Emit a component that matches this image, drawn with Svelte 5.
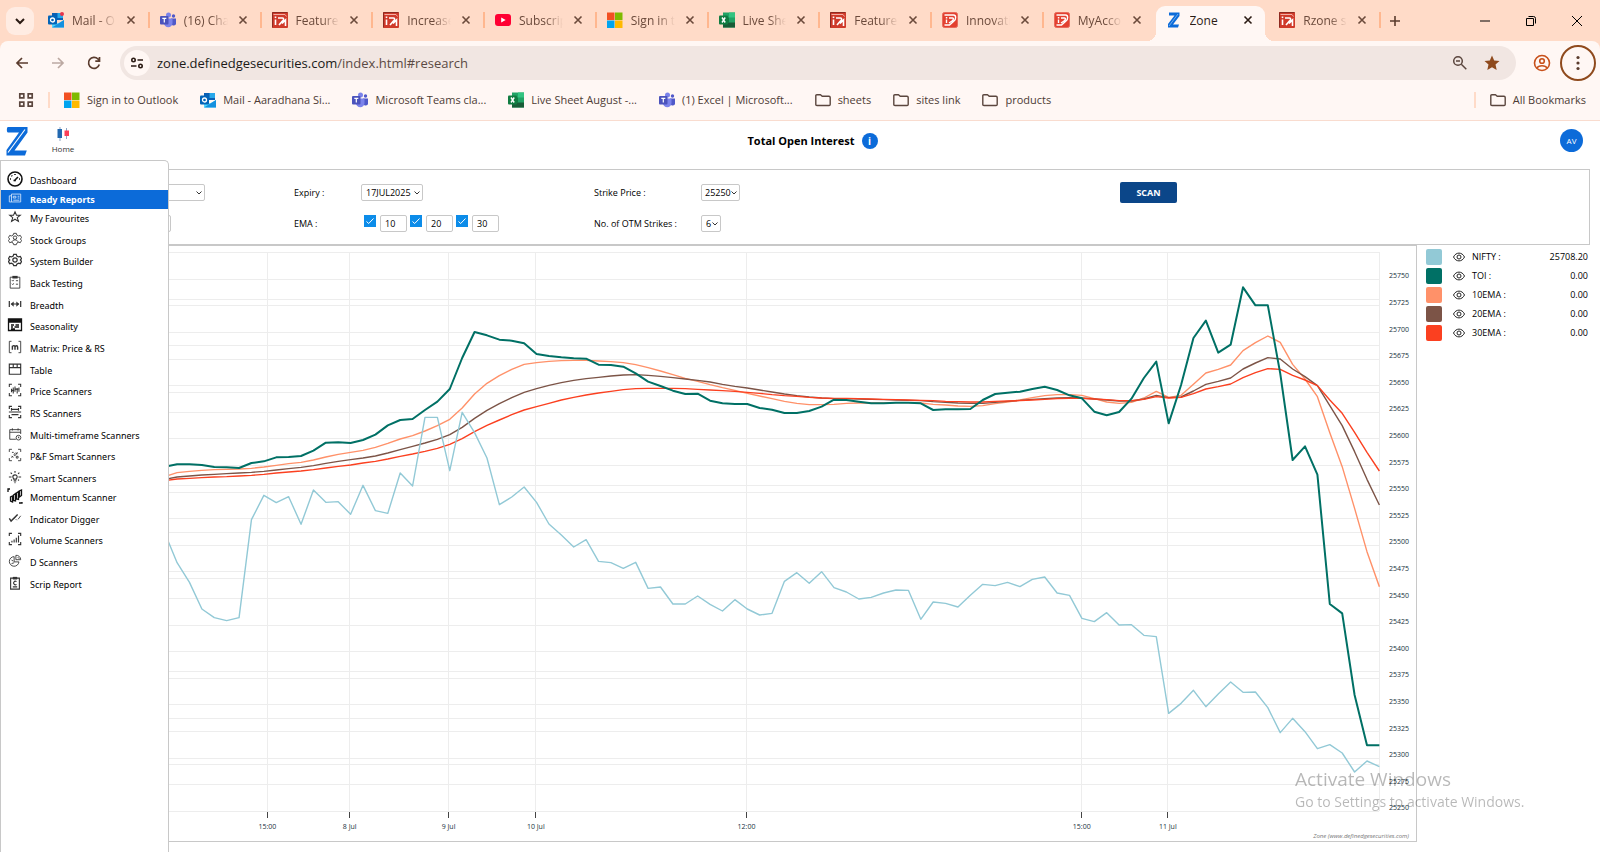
<script>
	const tabs = [
		{ icon: 'outlook', title: 'Mail - O', dot: true },
		{ icon: 'teams', title: '(16) Cha' },
		{ icon: 'rz', title: 'Feature' },
		{ icon: 'rz', title: 'Increase' },
		{ icon: 'youtube', title: 'Subscrip' },
		{ icon: 'ms', title: 'Sign in t' },
		{ icon: 'excel', title: 'Live She' },
		{ icon: 'rz', title: 'Feature' },
		{ icon: 'rd', title: 'Innovati' },
		{ icon: 'rd', title: 'MyAcco' },
		{ icon: 'zone', title: 'Zone', active: true },
		{ icon: 'rz', title: 'Rzone s' }
	];

	const bookmarks = [
		{ icon: 'ms', title: 'Sign in to Outlook' },
		{ icon: 'outlook', title: 'Mail - Aaradhana Si...' },
		{ icon: 'teams', title: 'Microsoft Teams cla...' },
		{ icon: 'excel', title: 'Live Sheet August -...' },
		{ icon: 'teams', title: '(1) Excel | Microsoft...' },
		{ icon: 'folder', title: 'sheets' },
		{ icon: 'folder', title: 'sites link' },
		{ icon: 'folder', title: 'products' }
	];

	const corners = 'M1.5 4.5v-3h3M11.5 1.5h3v3M1.5 11.5v3h3M11.5 14.5h3v-3';
	const gear =
		'M6.5 1.5h3l.6 2 2 1 2-.6 1.4 2.6-1.4 1.5 1.4 1.6-1.4 2.6-2-.6-2 1.1-.6 1.8h-3l-.6-1.8-2-1.1-2 .6L.5 9.600 2 8 .5 6.500l1.400-2.600 2 .600 2-1z';

	// row is the height class, d is stroked and fill is painted solid
	const menu = [
		{ label: 'Dashboard', row: 'low', big: true, w: 1.6, d: 'M8 1a7 7 0 1 1 0 14 7 7 0 0 1 0-14zM7 10l4-4M6.500 9.500h2.500M3 8h1M8 3v1M4.500 4.500l.7.7M12 8h1' },
		{ label: 'Ready Reports', row: 'low', active: true, d: 'M4 3.500h10.500v9H4zM4 5.500H1.500v7H4M6 6h3v2H6zM11 6h2M11 8h2M6 10.500h7' },
		{ label: 'My Favourites', row: 'low', w: 1.2, d: 'M8 2l1.700 4H14l-3.400 2.700 1.300 4.300L8 10.500 4.100 13l1.300-4.300L2 6h4.300z' },
		{ label: 'Stock Groups', row: 'high', d: gear + 'M8 4.500a2 2 0 1 1 0 4 2 2 0 0 1 0-4zM4.500 12c0-4 7-4 7 0' },
		{ label: 'System Builder', row: 'mid', w: 1.4, d: gear + 'M8 5.500a2.500 2.500 0 1 1 0 5 2.500 2.500 0 0 1 0-5z' },
		{ label: 'Back Testing', row: 'high', d: 'M2.500 2.500h11v12.500h-11zM4.500 6l1 1 1-1.500M4.500 10l1 1 1-1.500M9 6.500h2.500M9 10.500h2.500', fill: 'M5 1h6v3H5z' },
		{ label: 'Breadth', row: 'high', w: 1.4, d: 'M1.500 4.500v7M14.500 4.500v7M4 8h8', fill: 'M3 8l3.500-3v6zM13 8l-3.500-3v6z' },
		{ label: 'Seasonality', row: 'mid', w: 1.3, big: true, d: 'M1.500 2h13v11.500h-13zM1.500 3.500h13M1.500 5h13M4 8h3M8.500 8h3.500M4 10h2M7.500 10H12M4 12h4' },
		{ label: 'Matrix: Price & RS', row: 'high', d: 'M4 1.500H1.500v13H4M12 1.500h2.500v13H12', bold: 'M5 11V6.500M5 7.500c1-1.500 3-1.500 3 .5v3M8 8c.5-2 3-2 3 0v3' },
		{ label: 'Table', row: 'high', w: 1.3, d: 'M1.500 2.500h13v11.500h-13zM1.500 6.500h13M6 2.500v4M10.500 2.500v4' },
		{ label: 'Price Scanners', row: 'mid', w: 1.2, d: corners + 'M4 10.500V6.500M6 12V5M8 10V4M10.500 12V6M12.500 10V5', bold: 'M3.500 8.500h3.500M8 7h4' },
		{ label: 'RS Scanners', row: 'high', w: 1.3, d: corners + 'M4 5h8M1 8h14M4 11h8M4 3.500v3M12 3.500v3' },
		{ label: 'Multi-timeframe Scanners', row: 'high', d: 'M9 14H2V3h12.500v5M2 6h12.500M5 1.500V4M11.500 1.500V4M12 9.500a2.700 2.700 0 1 1 0 5.400 2.700 2.700 0 0 1 0-5.400zM12 11v1.500h1' },
		{ label: 'P&F Smart Scanners', row: 'mid', d: corners + 'M4 9l2 2M6 9l-2 2M9 5l2 2M11 5L9 7M7 7.500a1 1 0 1 1 0 .1zM9.500 9.500h2v2h-2zM4.500 5h2' },
		{ label: 'Smart Scanners', row: 'high', w: 1.3, d: 'M5.500 8a2.500 2.500 0 1 1 5 0l-1 2.500h-3zM6.500 12.500h3M8 1v2M3 3l1.500 1.500M13 3l-1.500 1.500M1 8h3M12 8h3M3.500 12l1-1M12.500 12l-1-1M7.500 14.500h1' },
		{ label: 'Momentum Scanner', row: 'low', big: true, w: 1.3, d: 'M1 4V1h2M12 15h3v-1M3.500 9v4l2 1V8zM6.500 7v5.500l2 .5V5.500zM9.500 5v6l2 .5V3.500zM12.500 3v6l2-1.500V2z' },
		{ label: 'Indicator Digger', row: 'high', d: 'M6 9l2.500-2M11.500 9.500l3-4M9 9.500l1 1', bold: 'M1.500 8.500l2 3L11 4' },
		{ label: 'Volume Scanners', row: 'mid', w: 1.3, d: corners + 'M4.500 12v-2M7 12V8.500M9.500 12V6.500M12 12V4' },
		{ label: 'D Scanners', row: 'high', d: 'M7 3a5.500 5.500 0 1 0 5.500 6H7zM9 1.500a5 5 0 0 1 5.500 5H9zM4 7l2 1M4 11l3-1M11 3.500l2 2' },
		{ label: 'Scrip Report', row: 'high', w: 1.3, d: 'M3 2.500h10v12.500H3zM5.500 12.500h5M9.700 6.500a2 2 0 1 0 0 3M8 5v1', fill: 'M5.500 1h5v3h-5z' }
	];

	// series values are measured down from the top of the pane, one per bar
	const series = [
		{
			name: '10EMA', value: '0.00', color: '#ff9169', width: 1.4,
			points: [710, 698, 694, 691, 689, 688, 687, 685, 681, 676, 671, 667, 660, 651, 643, 637, 631, 622, 610, 597, 587, 573, 557, 538, 504, 462, 430, 407, 388, 373, 368, 364, 362, 361, 361, 363, 365, 368, 374, 383, 393, 404, 415, 424, 434, 443, 451, 460, 468, 476, 484, 490, 494, 494, 493, 490, 489, 489, 489, 488, 488, 489, 493, 495, 498, 499, 497, 491, 486, 480, 473, 467, 464, 464, 466, 476, 486, 490, 487, 474, 454, 472, 466, 433, 399, 388, 375, 332, 308, 288, 307, 373, 417, 470, 578, 680, 805, 935, 1040]
		},
		{
			name: '20EMA', value: '0.00', color: '#7c5447', width: 1.4,
			points: [718, 711, 708, 705, 703, 701, 699, 697, 694, 690, 686, 682, 677, 670, 664, 659, 654, 648, 639, 629, 619, 609, 598, 584, 562, 535, 511, 491, 473, 457, 446, 436, 428, 421, 416, 412, 408, 405, 404, 406, 409, 413, 417, 421, 426, 433, 439, 444, 450, 456, 462, 467, 471, 474, 476, 476, 477, 478, 479, 480, 481, 482, 485, 487, 489, 490, 490, 487, 484, 481, 478, 476, 474, 473, 474, 477, 480, 483, 483, 477, 466, 473, 471, 453, 433, 424, 414, 387, 369, 353, 357, 387, 410, 437, 497, 557, 635, 718, 795]
		},
		{
			name: '30EMA', value: '0.00', color: '#fb4020', width: 1.4,
			points: [722, 717, 715, 713, 711, 710, 708, 706, 703, 699, 696, 693, 689, 684, 679, 675, 669, 664, 657, 649, 642, 634, 625, 613, 596, 575, 556, 540, 524, 510, 500, 490, 480, 472, 465, 459, 454, 449, 446, 445, 445, 445, 446, 448, 450, 452, 454, 457, 460, 464, 467, 469, 472, 474, 475, 475, 476, 477, 478, 479, 480, 481, 482, 484, 485, 486, 486, 484, 483, 482, 480, 478, 476, 475, 475, 477, 479, 482, 482, 478, 470, 474, 472, 461, 447, 440, 432, 413, 398, 386, 388, 406, 420, 437, 480, 520, 577, 637, 693]
		},
		{
			name: 'NIFTY', value: '25708.20', color: '#92c9d6', width: 1.4,
			points: [878, 968, 1027, 1107, 1133, 1142, 1133, 839, 766, 788, 770, 853, 750, 787, 785, 823, 736, 812, 820, 699, 738, 532, 532, 692, 517, 578, 654, 794, 771, 741, 787, 852, 885, 921, 899, 964, 968, 985, 967, 1045, 1041, 1092, 1092, 1068, 1093, 1113, 1079, 1107, 1125, 1120, 1024, 998, 1030, 995, 1043, 1056, 1077, 1072, 1059, 1050, 1051, 1138, 1086, 1090, 1101, 1066, 1033, 1037, 1027, 1040, 1018, 1011, 1059, 1066, 1135, 1145, 1118, 1155, 1154, 1186, 1190, 1420, 1390, 1351, 1400, 1362, 1326, 1357, 1356, 1403, 1478, 1435, 1475, 1526, 1514, 1539, 1596, 1563, 1580]
		},
		{
			name: 'TOI', value: '0.00', color: '#007065', width: 2,
			points: [680, 673, 673, 675, 681, 682, 684, 669, 664, 652, 651, 648, 632, 608, 607, 609, 600, 584, 556, 540, 537, 510, 485, 447, 354, 276, 286, 299, 302, 310, 342, 348, 352, 355, 356, 374, 375, 380, 400, 425, 438, 452, 462, 461, 482, 490, 492, 492, 504, 509, 519, 519, 513, 500, 479, 480, 485, 490, 490, 488, 488, 490, 510, 508, 508, 507, 480, 462, 458, 455, 447, 440, 450, 466, 475, 515, 526, 516, 476, 414, 365, 550, 435, 294, 242, 338, 314, 142, 196, 196, 400, 660, 619, 704, 1092, 1120, 1365, 1516, 1516]
		}
	];

	const legend = ['NIFTY', 'TOI', '10EMA', '20EMA', '30EMA'].map((n) => series.find((s) => s.name === n));

	// pane geometry: x counts bars, y counts thirds of a pixel
	const pane = { x: -13.4, y: 36, w: 110.45, h: 1680 };
	const prices = Array.from({ length: 21 }, (_, i) => ({ label: 25750 - i * 25, y: 118 + i * 79.8 }));
	const levels = Array.from({ length: 13 }, (_, i) => 37.5 + i * 139.75);
	const times = [
		{ x: 7.29, label: '15:00' },
		{ x: 13.93, label: '8 Jul' },
		{ x: 21.9, label: '9 Jul' },
		{ x: 28.94, label: '10 Jul' },
		{ x: 45.94, label: '12:00' },
		{ x: 72.99, label: '15:00' },
		{ x: 79.93, label: '11 Jul' }
	];

	const toLine = (points) => points.map((y, i) => `${i - 1},${y}`).join(' ');
	const xPct = (x) => `${((x - pane.x) / pane.w) * 100}%`;
	const yPct = (y) => `${((y - pane.y) / pane.h) * 100}%`;

	let emas = $state([
		{ on: true, period: '10' },
		{ on: true, period: '20' },
		{ on: true, period: '30' }
	]);
</script>

{#snippet favicon(name)}
	<svg class="fav" viewBox="0 0 16 16" aria-hidden="true">
		{#if name === 'outlook'}
			<path fill="#0a5fb4" d="M4 1h11v7H4z" />
			<path fill="#28a8ea" d="M9.500 1H15v5H9.500z" />
			<path fill="#50d9ff" d="M4 8l6 3.500L16 8v7.500H4z" />
			<path fill="#1490df" d="M4 15.500L16 8v7.500z" />
			<rect fill="#0364b8" y="3.500" width="9" height="9" rx="1" />
			<circle cx="4.500" cy="8" r="2" fill="none" stroke="#fff" stroke-width="1.300" />
		{:else if name === 'teams'}
			<circle cx="8.500" cy="3" r="2.500" fill="#7b83eb" />
			<circle cx="13.500" cy="4" r="1.700" fill="#5059c9" />
			<path fill="#5059c9" d="M11 6.500h5v4a2.500 2.500 0 0 1-5 1z" />
			<path fill="#7b83eb" d="M4 6.500h8.500V11a4.200 4.200 0 0 1-8.500 0z" />
			<rect fill="#4b53bc" y="4" width="8.500" height="8.500" rx="1" />
			<path stroke="#fff" stroke-width="1.200" fill="none" d="M2.300 6.300h4M4.300 6.300v4.200" />
		{:else if name === 'rz'}
			<rect width="16" height="16" rx="1" fill="#cf3a2a" />
			<path stroke="#8e2a20" fill="none" d="M.5 15.500V.5h15" />
			<path stroke="#f3aea4" fill="none" d="M1.500 2.500h11.500l1.500 2" />
			<path stroke="#fff" stroke-width="1.600" fill="none" d="M3.500 7.500V13M6 6h4.500c1.500 0 1.500 2.500 0 3L7 13M10 11.500L13.500 8v6" />
			<path fill="#fff" d="M2.700 4.500h1.600v1.600H2.700z" />
		{:else if name === 'rd'}
			<rect x=".5" y=".5" width="15" height="15" rx="2" fill="#e3402f" stroke="#e86a5c" />
			<path stroke="#fff" stroke-width="1.400" fill="none" d="M2.500 3h9c3 0 2.500 4.500.5 6l-4.500 4H2.500M4.500 7.500V11M7 6h3.500c1.500 0 1 2-.5 3L7 11" />
			<path fill="#fff" d="M3.800 5h1.500v1.500H3.800z" />
		{:else if name === 'youtube'}
			<rect y="2" width="16" height="12" rx="3" fill="#f03" />
			<path fill="#fff" d="M6.200 5.500v5l4.500-2.500z" />
		{:else if name === 'ms'}
			<path fill="#f25022" d="M0 .5h7.500V8H0z" />
			<path fill="#7fba00" d="M8 .5h7.500V8H8z" />
			<path fill="#00a4ef" d="M0 8.500h7.500V16H0z" />
			<path fill="#ffb900" d="M8 8.500h7.500V16H8z" />
		{:else if name === 'excel'}
			<path fill="#21a366" d="M4 .5h12v15H4z" />
			<path fill="#107c41" d="M4 5.500h6v5H4z" />
			<path fill="#33c481" d="M10 .5h6v5h-6z" />
			<path fill="#185c37" d="M4 10.500h12v5H4z" />
			<rect fill="#107c41" y="3.500" width="9" height="9" rx="1" />
			<path stroke="#fff" stroke-width="1.400" d="M3 5.500l3.200 5M6.200 5.500L3 10.500" />
		{:else if name === 'zone'}
			<path fill="#0c6bd9" d="M3 .5h10.500V4L7 12.500h6L12 15.500H2V12L8.500 3.500H3z" />
			<path stroke="#9cc7f5" stroke-width=".7" d="M3 14L12 2" />
		{:else}
			<path fill="none" stroke="#5b463e" stroke-width="1.400" stroke-linejoin="round" d="M.8 3.800c0-.8.3-1.100 1-1.100h3.700L7.200 4.300h6.800c.8 0 1.200.4 1.200 1.100v7c0 .8-.4 1.100-1.100 1.100H2c-.8 0-1.200-.4-1.200-1.100z" />
		{/if}
	</svg>
{/snippet}

<div class="window">
	<header class="browser">
		<div class="tabstrip">
			<button class="tab-search" aria-label="Search tabs">
				<svg width="12" height="12" viewBox="0 0 12 12"><path d="M2 4l4 4 4-4" fill="none" stroke="#2b1b14" stroke-width="2" /></svg>
			</button>
			<div class="tabs">
				{#each tabs as tab}
					<div class={tab.active ? 'tab active' : 'tab'}>
						<span class="tab-icon">
							{@render favicon(tab.icon)}
							{#if tab.dot}<i class="dot"></i>{/if}
						</span>
						<span class="tab-title">{tab.title}</span>
						<button class="tab-close" aria-label="Close tab">
							<svg width="10" height="10" viewBox="0 0 10 10"><path d="M1.500 1.500l7 7M8.500 1.500l-7 7" stroke="currentColor" stroke-width="1.600" /></svg>
						</button>
					</div>
				{/each}
			</div>
			<button class="new-tab" aria-label="New tab">
				<svg width="12" height="12" viewBox="0 0 12 12"><path d="M6 1v10M1 6h10" stroke="#5b3c2e" stroke-width="1.600" /></svg>
			</button>
			<div class="win-buttons">
				<button aria-label="Minimise"><svg width="12" height="12" viewBox="0 0 12 12"><path d="M1 6h10" stroke="#000" /></svg></button>
				<button aria-label="Restore"><svg width="12" height="12" viewBox="0 0 12 12"><path d="M3.500 1.500h5a2 2 0 0 1 2 2v5M1.500 3.500h7v7h-7z" fill="none" stroke="#000" /></svg></button>
				<button aria-label="Close"><svg width="12" height="12" viewBox="0 0 12 12"><path d="M1 1l10 10M11 1L1 11" stroke="#000" /></svg></button>
			</div>
		</div>

		<div class="toolbar">
			<button class="nav" aria-label="Back"><svg width="16" height="16" viewBox="0 0 16 16"><path d="M14 8H3M8 3L3 8l5 5" fill="none" stroke="#5b3c2e" stroke-width="1.700" /></svg></button>
			<button class="nav" aria-label="Forward"><svg width="16" height="16" viewBox="0 0 16 16"><path d="M2 8h11M8 3l5 5-5 5" fill="none" stroke="#bca9a2" stroke-width="1.700" /></svg></button>
			<button class="nav" aria-label="Reload"><svg width="16" height="16" viewBox="0 0 16 16"><path d="M13.300 9.500A5.500 5.500 0 1 1 12 4l1.500 1.700M13.500 2v4.200H9.300" fill="none" stroke="#5b3c2e" stroke-width="1.700" /></svg></button>
			<div class="omnibox">
				<button class="site" aria-label="View site information">
					<svg width="14" height="14" viewBox="0 0 14 14"><g fill="none" stroke="#2b1b14" stroke-width="1.600"><circle cx="3.500" cy="4" r="1.700" /><path d="M7.500 4H13M1 10h5.500" /><circle cx="10.500" cy="10" r="1.700" /></g></svg>
				</button>
				<div class="url">zone.definedgesecurities.com<span>/index.html#research</span></div>
				<button class="box-btn" aria-label="Zoom"><svg width="16" height="16" viewBox="0 0 16 16"><g fill="none" stroke="#5b463e" stroke-width="1.500"><circle cx="6" cy="6" r="4.300" /><path d="M9.300 9.300l5 5M4 6h4" /></g></svg></button>
				<button class="box-btn" aria-label="Bookmark"><svg width="16" height="16" viewBox="0 0 16 16"><path fill="#8f4a1d" d="M8 .5l2.200 5 5.300.5-4 3.600 1.200 5.400L8 12.200 3.300 15l1.200-5.400L.5 6l5.300-.5z" /></svg></button>
			</div>
			<button class="profile" aria-label="Profile">
				<svg width="18" height="18" viewBox="0 0 18 18"><g fill="none" stroke="#c8501a" stroke-width="1.600"><circle cx="9" cy="9" r="7.500" /><circle cx="9" cy="7" r="2.300" /><path d="M4 14c1.500-3 8.500-3 10 0" /></g></svg>
			</button>
			<button class="more" aria-label="Menu">
				<svg width="4" height="16" viewBox="0 0 4 16" fill="#5b3c2e"><circle cx="2" cy="2.500" r="1.600" /><circle cx="2" cy="8" r="1.600" /><circle cx="2" cy="13.500" r="1.600" /></svg>
			</button>
		</div>

		<nav class="bookmarks">
			<button class="apps" aria-label="Apps">
				<svg width="16" height="16" viewBox="0 0 16 16"><path d="M1.800 1.800h4v4h-4zM10.200 1.800h4v4h-4zM1.800 10.200h4v4h-4zM10.200 10.200h4v4h-4z" fill="none" stroke="#5b463e" stroke-width="1.700" /></svg>
			</button>
			<i class="bar"></i>
			{#each bookmarks as b}
				<a class="bookmark" href="#{b.icon}">{@render favicon(b.icon)}<span>{b.title}</span></a>
			{/each}
			<i class="bar push"></i>
			<a class="bookmark" href="#all">{@render favicon('folder')}<span>All Bookmarks</span></a>
		</nav>
	</header>

	<main class="app">
		<div class="app-head">
			<svg class="logo" width="24" height="32" viewBox="0 0 24 32" aria-hidden="true">
				<path fill="#0c6bd9" d="M3 2h19.500v5.500L9.500 25.500h12.300L20 30.500H1.500V25L14 7.500H3C1.500 7.500 1.500 2 3 2z" />
				<path d="M3 27.500L20 4.500" stroke="#fff" stroke-width="1.100" />
			</svg>
			<a class="home" href="#home">
				<svg width="14" height="14" viewBox="0 0 14 14"><path d="M4 0v14M10.500 1v11" stroke="#8fa5c4" /><path fill="#2268b0" d="M1.500 2h4.500v9H1.500z" /><path fill="#fb4058" d="M8.500 3.500H13V9H8.500z" /></svg>
				<span>Home</span>
			</a>
			<h1>Total Open Interest <button class="info" aria-label="About this report">i</button></h1>
			<button class="avatar">AV</button>
		</div>

		<form class="filters" onsubmit={(e) => e.preventDefault()}>
			<select class="symbol" aria-label="Symbol"></select>
			<label for="expiry">Expiry :</label>
			<div><select id="expiry" class="wide"><option>17JUL2025</option></select></div>
			<label for="strike">Strike Price :</label>
			<div><select id="strike" class="medium"><option>25250</option></select></div>
			<div><button class="scan">SCAN</button></div>

			<input class="interval" type="text" aria-label="Interval" />
			<span>EMA :</span>
			<div class="emas">
				{#each emas as ema}
					<input type="checkbox" bind:checked={ema.on} aria-label="Show {ema.period} EMA" />
					<input type="text" bind:value={ema.period} aria-label="EMA period" />
				{/each}
			</div>
			<label for="otm">No. of OTM Strikes :</label>
			<div><select id="otm" class="narrow"><option>6</option></select></div>
		</form>

		<div class="report">
			<section class="chart">
				<svg class="plot" viewBox="{pane.x} {pane.y} {pane.w} {pane.h}" preserveAspectRatio="none">
					<g class="grid">
						{#each levels as y}<path d="M-13 {y}H97" />{/each}
						{#each prices as p}<path d="M-13 {p.y}H97" />{/each}
						{#each times as t}<path d="M{t.x} 37V1714" />{/each}
						<path d="M97 37V1714" />
					</g>
					{#each series as s}
						<polyline class="line" points={toLine(s.points)} stroke={s.color} stroke-width={s.width} />
					{/each}
				</svg>
				<svg class="price-axis">
					{#each prices as p}<text x="9" y={yPct(p.y)} dy="-1">{p.label}</text>{/each}
				</svg>
				<svg class="time-axis">
					{#each times as t}
						<line x1={xPct(t.x)} x2={xPct(t.x)} y1="0" y2="6" />
						<text x={xPct(t.x)} y="17">{t.label}</text>
					{/each}
				</svg>
				<p class="credit">Zone (www.definedgesecurities.com)</p>
			</section>

			<ul class="legend">
				{#each legend as s}
					<li>
						<i class="swatch" style="background: {s.color}"></i>
						<svg width="12" height="12" viewBox="0 0 12 12"><g fill="none" stroke="#222"><path d="M.5 6C3 .8 9 .8 11.500 6 9 11.200 3 11.200.5 6z" /><circle cx="6" cy="6" r="2" /></g></svg>
						<span>{s.name} :</span>
						<b>{s.value}</b>
					</li>
				{/each}
			</ul>
		</div>

		<nav class="side-menu">
			{#each menu as item}
				<a class="{item.row} {item.active ? 'current' : ''}" href="#research">
					<svg class={item.big ? 'big' : ''} viewBox="0 0 16 16" aria-hidden="true">
						<path d={item.d} fill="none" stroke="currentColor" stroke-width={item.w ?? 1} />
						{#if item.bold}<path d={item.bold} fill="none" stroke="currentColor" stroke-width="1.600" />{/if}
						{#if item.fill}<path d={item.fill} fill="currentColor" />{/if}
					</svg>
					<span>{item.label}</span>
				</a>
			{/each}
		</nav>
	</main>

	<aside class="watermark">
		<strong>Activate Windows</strong>
		<span>Go to Settings to activate Windows.</span>
	</aside>
</div>

<style>
	:global(body) {
		margin: 0;
		background: #fff;
		font-family: 'Open Sans', 'Noto Sans', sans-serif;
	}

	.window {
		display: flex;
		flex-direction: column;
		min-height: 100vh;
	}
	.window * {
		box-sizing: border-box;
	}
	button {
		display: inline-flex;
		align-items: center;
		justify-content: center;
		flex: none;
		padding: 0;
		border: 0;
		background: none;
		font: inherit;
		color: inherit;
	}
	a {
		color: inherit;
		text-decoration: none;
	}
	svg {
		display: block;
		flex: none;
	}

	/* browser */
	.browser {
		background: #ffdbc8;
		border-bottom: 1px solid #f9dccf;
		color: #4d3b34;
		font-size: 12px;
	}
	.tabstrip {
		display: flex;
		align-items: center;
		height: 41px;
		padding-left: 6px;
	}
	.tab-search {
		width: 28px;
		height: 28px;
		border-radius: 9px;
		background: #ffece3;
	}
	.tabs {
		display: flex;
		flex: 0 1 1343px;
		align-self: flex-end;
		min-width: 0;
		margin-left: 4px;
	}
	.tab {
		position: relative;
		display: flex;
		flex: 1 1 0;
		align-items: center;
		min-width: 0;
		height: 35px;
		padding: 0 14px 7px 10px;
		color: #6b4a3b;
	}
	.tab::after {
		content: '';
		position: absolute;
		right: 0;
		top: 6px;
		width: 2px;
		height: 16px;
		background: #ffb78f;
	}
	.tab.active {
		margin-right: 4px;
		padding-right: 12px;
		border-radius: 9px 9px 0 0;
		background: #fff7f4;
		color: #2b1b14;
	}
	.tab:nth-last-child(3)::after {
		background: none;
	}
	/* flared feet of the active tab */
	.tab.active::before,
	.tab.active::after {
		content: '';
		position: absolute;
		top: auto;
		bottom: 0;
		width: 9px;
		height: 9px;
	}
	.tab.active::before {
		left: -9px;
		background: radial-gradient(circle at 0 0, transparent 9px, #fff7f4 9px);
	}
	.tab.active::after {
		right: -9px;
		background: radial-gradient(circle at 100% 0, transparent 9px, #fff7f4 9px);
	}
	.tab-icon {
		position: relative;
	}
	.fav {
		width: 16px;
		height: 16px;
	}
	.dot {
		position: absolute;
		right: 0;
		top: 0;
		width: 4px;
		height: 4px;
		border-radius: 2px;
		background: #e8334a;
	}
	.tab-title {
		flex: 1;
		min-width: 0;
		margin: 0 10px 0 8px;
		overflow: hidden;
		white-space: nowrap;
		-webkit-mask: linear-gradient(to right, #000 60%, transparent);
		mask: linear-gradient(to right, #000 60%, transparent);
	}
	.active .tab-title {
		-webkit-mask: none;
		mask: none;
	}
	.new-tab {
		width: 28px;
		height: 28px;
	}
	.win-buttons {
		display: flex;
		margin-left: auto;
	}
	.win-buttons button {
		width: 46px;
		height: 40px;
	}

	.toolbar {
		display: flex;
		align-items: center;
		height: 43px;
		padding: 0 4px;
		border-radius: 8px 8px 0 0;
		background: #fff7f4;
	}
	.nav {
		width: 36px;
		height: 36px;
	}
	.omnibox {
		display: flex;
		flex: 1;
		align-items: center;
		height: 34px;
		margin-left: 8px;
		padding: 0 16px 0 4px;
		border-radius: 17px;
		background: #f1e6e2;
	}
	.site {
		width: 26px;
		height: 26px;
		border-radius: 13px;
		background: #fff7f4;
	}
	.url {
		flex: 1;
		margin-left: 7px;
		font-size: 13px;
		color: #201a18;
	}
	.url span {
		color: #5b4a44;
	}
	.box-btn {
		width: 16px;
		margin-left: 16px;
	}
	.profile {
		width: 36px;
		height: 36px;
		margin-left: 8px;
	}
	.more {
		width: 36px;
		height: 36px;
		border: 2px solid #8f4a1d;
		border-radius: 18px;
	}

	.bookmarks {
		display: flex;
		align-items: center;
		gap: 22px;
		height: 36px;
		padding: 0 14px 5px 18px;
		background: #fff7f4;
		font-size: 11px;
	}
	.bar {
		width: 2px;
		height: 16px;
		margin: 0 -8px;
		background: #ffdbc8;
	}
	.push {
		margin-left: auto;
	}
	.bookmark {
		display: flex;
		gap: 7px;
		align-items: center;
		white-space: nowrap;
	}

	/* page */
	.app {
		position: relative;
		display: flex;
		flex: 1;
		flex-direction: column;
		padding: 0 10px 10px;
		font-size: 9px;
		color: #000;
	}
	.app-head {
		display: flex;
		align-items: center;
		height: 48px;
		padding: 0 7px 9px 0;
		margin-left: -5px;
	}
	.home {
		display: flex;
		flex-direction: column;
		gap: 2px;
		align-items: center;
		width: 40px;
		margin-left: 14px;
		font-size: 8px;
		line-height: 12px;
		color: #333;
	}
	h1 {
		display: flex;
		flex: 1;
		align-items: center;
		justify-content: center;
		gap: 7px;
		margin: 0;
		padding-right: 18px;
		font-size: 11px;
		font-weight: 700;
	}
	.info {
		width: 16px;
		height: 16px;
		border-radius: 8px;
		background: #0c6bd9;
		color: #fff;
		font-size: 10px;
	}
	.avatar {
		width: 23px;
		height: 23px;
		border-radius: 12px;
		background: #0c6bd9;
		color: #fff;
		font-size: 8px;
	}

	.filters {
		display: grid;
		grid-template-columns: 283px 67px 233px 107px 419px 1fr;
		grid-template-rows: 31px 31px;
		align-items: center;
		height: 76px;
		padding-top: 7px;
		border: 1px solid #c8c8c8;
	}
	select,
	input[type='text'] {
		height: 17px;
		padding: 0 4px;
		border: 1px solid #c8c8c8;
		border-radius: 2px;
		background: #fff;
		font: inherit;
		color: #000;
	}
	select {
		appearance: none;
		display: block;
		background: #fff url("data:image/svg+xml,%3Csvg xmlns='http://www.w3.org/2000/svg' width='6' height='4' viewBox='0 0 6 4'%3E%3Cpath d='M.5.5L3 3 5.500.5' fill='none' stroke='%23333'/%3E%3C/svg%3E") no-repeat right 2px center;
	}
	.symbol {
		width: 94px;
		margin-left: 100px;
	}
	.interval {
		width: 60px;
		margin-left: 100px;
	}
	.wide {
		width: 62px;
	}
	.medium {
		width: 39px;
		padding: 0 3px;
	}
	.narrow {
		width: 20px;
	}
	.emas {
		display: flex;
		gap: 3px;
		padding-left: 3px;
	}
	.emas input[type='text'] {
		width: 27px;
	}
	.emas input[type='checkbox'] {
		appearance: none;
		width: 12px;
		height: 12px;
		margin: 0 1px 0 0;
		border: 1px solid #0c8ce9;
	}
	.emas input[type='checkbox']:checked {
		background: #0c8ce9 url("data:image/svg+xml,%3Csvg xmlns='http://www.w3.org/2000/svg' viewBox='0 0 10 10'%3E%3Cpath d='M1.500 5.500l2.200 2L8.500 2.500' fill='none' stroke='white'/%3E%3C/svg%3E");
	}
	.scan {
		width: 57px;
		height: 21px;
		border-radius: 2px;
		background: #0b4689;
		color: #fff;
		font-weight: 700;
	}

	.report {
		display: flex;
	}
	.chart {
		display: grid;
		flex: 1;
		grid-template-columns: 1fr 36px;
		grid-template-rows: 560px 19px 10px;
		min-width: 0;
		padding-top: 6px;
		border: 1px solid #c8c8c8;
	}
	.chart svg {
		width: 100%;
		height: 100%;
		overflow: visible;
	}
	.chart .plot {
		overflow: hidden;
	}
	.grid path {
		stroke: #ededed;
		vector-effect: non-scaling-stroke;
		shape-rendering: crispEdges;
	}
	.line {
		fill: none;
		stroke-linejoin: round;
		vector-effect: non-scaling-stroke;
	}
	.chart text {
		font-size: 7px;
		fill: #17303d;
	}
	.time-axis text {
		text-anchor: middle;
	}
	.time-axis line {
		stroke: #444;
		shape-rendering: crispEdges;
	}
	.credit {
		grid-column: 1 / -1;
		grid-row: 3;
		margin: 0;
		padding-right: 7px;
		text-align: right;
		font-size: 6px;
		font-style: italic;
		line-height: 10px;
		color: #777;
	}

	.legend {
		width: 173px;
		margin: 0;
		padding: 2px 2px 0 9px;
		list-style: none;
	}
	.legend li {
		display: flex;
		align-items: center;
		height: 19px;
	}
	.swatch {
		width: 16px;
		height: 16px;
		margin-right: 11px;
		border-radius: 2px;
	}
	.legend span {
		margin-left: 7px;
	}
	.legend b {
		margin-left: auto;
		font-weight: 400;
	}

	.side-menu {
		position: absolute;
		left: 0;
		top: 39px;
		bottom: 0;
		width: 169px;
		padding-top: 10px;
		border: 1px solid #c8c8c8;
		border-bottom: 0;
		border-top-right-radius: 5px;
		background: #fff;
		font-family: 'Noto Sans', 'Open Sans', sans-serif;
	}
	.side-menu a {
		display: flex;
		align-items: flex-end;
		padding-left: 7px;
	}
	.side-menu svg {
		width: 14px;
		height: 14px;
		margin: 0 8px 4px 0;
		color: #333;
	}
	.side-menu .big {
		width: 16px;
		height: 16px;
		margin: 0 7px 3px -1px;
		color: #111;
	}
	.side-menu span {
		line-height: 19px;
	}
	.low {
		height: 19px;
	}
	.mid {
		height: 21px;
	}
	.high {
		height: 22px;
	}
	.side-menu .current {
		background: #0c6bd9;
		color: #fff;
		font-weight: 700;
	}
	.side-menu .current svg {
		color: #cfe2fa;
	}

	.watermark {
		position: fixed;
		right: 0;
		bottom: 39px;
		display: flex;
		flex-direction: column;
		width: 305px;
		color: #000;
		opacity: 0.28;
		pointer-events: none;
	}
	.watermark strong {
		font-size: 19px;
		font-weight: 400;
		line-height: 24px;
	}
	.watermark span {
		font-size: 14px;
		line-height: 22px;
	}
</style>
